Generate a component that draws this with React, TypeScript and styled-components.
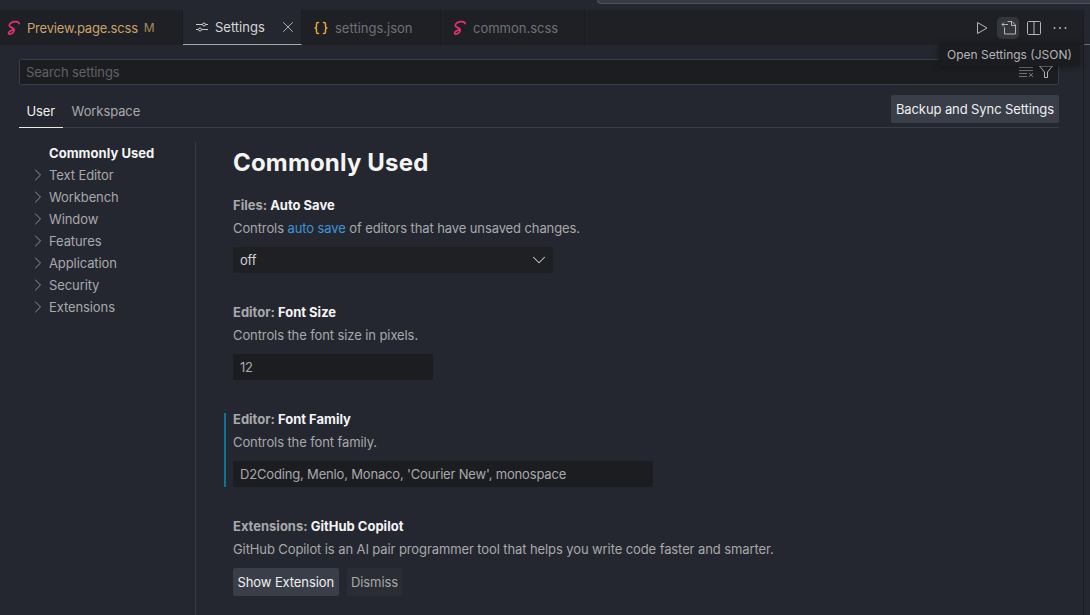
import styled, { createGlobalStyle } from 'styled-components';
import { ChevronDown, ChevronRight, X } from 'lucide-react';

const Global = createGlobalStyle`
  html, body {
    margin: 0;
    padding: 0;
    height: 100%;
    background: #24272f;
    overflow: hidden;
  }
  #root {
    height: 100%;
  }
`;

const Page = styled.div`
  width: 1090px;
  height: 615px;
  position: relative;
  overflow: hidden;
  background: #24272f;
  color: #a8a9ac;
  font-family: Inter, 'Liberation Sans', sans-serif;
  font-size: 13px;
  letter-spacing: -0.1px;
  display: flex;
  flex-direction: column;
`;

const TitleStrip = styled.div`
  height: 10px;
  flex: none;
  background: #24272f;
`;

const TitlePanel = styled.div`
  margin-left: 597px;
  height: 4px;
  box-sizing: border-box;
  background: #383b45;
  border-left: 1px solid #50535c;
  border-bottom: 1px solid #50535c;
  border-bottom-left-radius: 4px;
`;

const Workbench = styled.div`
  flex: 1;
  min-height: 0;
  display: flex;
`;

const EditorGroup = styled.div`
  width: 1084px;
  flex: none;
  box-sizing: border-box;
  border-right: 1px solid #1a1b1f;
  display: flex;
  flex-direction: column;
`;

const SidePeek = styled.div`
  flex: 1;
  height: 35px;
  box-sizing: border-box;
  border-bottom: 1px solid #6b6e75;
`;

const TabBar = styled.div`
  height: 35px;
  flex: none;
  background: #1e2025;
  display: flex;
`;

const Tab = styled.div<{ $width: number; $pad: number; $active?: boolean }>`
  width: ${(p) => p.$width}px;
  flex: none;
  box-sizing: border-box;
  display: flex;
  align-items: center;
  padding-left: ${(p) => p.$pad}px;
  gap: 6px;
  letter-spacing: 0;
  background: ${(p) => (p.$active ? '#24272f' : 'transparent')};
  border-right: 1px solid #1a1b1f;
  border-bottom: ${(p) => (p.$active ? '1px solid #a8a9ac' : '0')};
  color: ${(p) => (p.$active ? '#d6d7d9' : '#6f7175')};
`;

const TabName = styled.span<{ $modified?: boolean }>`
  color: ${(p) => (p.$modified ? '#c9a36c' : 'inherit')};
  letter-spacing: ${(p) => (p.$modified ? '-0.2px' : '0')};
`;

const TabBadge = styled.span`
  color: #a98a5c;
  font-size: 12px;
`;

const TabClose = styled.span`
  margin-left: auto;
  margin-right: 4px;
  display: flex;
  color: #c8c9cb;
`;

const Spacer = styled.div`
  flex: 1;
`;

const Actions = styled.div`
  display: flex;
  align-items: center;
  gap: 4px;
  padding-right: 12px;
`;

const ActionIcon = styled.div<{ $hover?: boolean }>`
  width: 22px;
  height: 22px;
  border-radius: 5px;
  display: flex;
  align-items: center;
  justify-content: center;
  color: #b4b5b8;
  background: ${(p) => (p.$hover ? '#33363b' : 'transparent')};
`;

const Main = styled.div`
  flex: 1;
  min-height: 0;
  padding: 14px 24px 0 19px;
  display: flex;
  flex-direction: column;
`;

const SearchBox = styled.div`
  height: 26px;
  flex: none;
  box-sizing: border-box;
  background: #1c1d21;
  border: 1px solid #383c47;
  border-radius: 2px;
  display: flex;
  align-items: center;
  padding: 0 4px 0 6px;
  color: #5f6165;
`;

const SearchTools = styled.div`
  margin-left: auto;
  margin-top: -5px;
  display: flex;
  align-items: center;
  gap: 4px;
  color: #6f7175;
`;

const TabsRow = styled.div`
  height: 43px;
  flex: none;
  box-sizing: border-box;
  border-bottom: 1px solid #383c47;
  display: flex;
  align-items: flex-end;
`;

const ScopeTab = styled.div<{ $active?: boolean }>`
  height: 32px;
  box-sizing: border-box;
  padding: 0 ${(p) => (p.$active ? '7.5px' : '9px')} 2px;
  margin-bottom: -1px;
  display: flex;
  align-items: center;
  color: ${(p) => (p.$active ? '#f0f0f1' : '#a8a9ac')};
  border-bottom: ${(p) => (p.$active ? '1px solid #e8e8e9' : '0')};
`;

const SyncButton = styled.div`
  margin-left: auto;
  margin-bottom: 4px;
  height: 28px;
  padding: 0 5px;
  border-radius: 2px;
  background: #393e49;
  color: #f0f0f1;
  display: flex;
  align-items: center;
  line-height: 28px;
`;

const Body = styled.div`
  flex: 1;
  min-height: 0;
  display: flex;
  padding-top: 14px;
`;

const Toc = styled.div`
  width: 177px;
  flex: none;
  box-sizing: border-box;
  border-right: 1px solid #383c47;
`;

const TocRow = styled.div<{ $strong?: boolean }>`
  height: 22px;
  display: flex;
  align-items: center;
  padding-left: 14px;
  gap: 5px;
  color: ${(p) => (p.$strong ? '#f4f4f5' : '#a8a9ac')};
  font-weight: ${(p) => (p.$strong ? 700 : 400)};
  letter-spacing: ${(p) => (p.$strong ? '0.05px' : '-0.1px')};
`;

const TocTwisty = styled.span<{ $hidden?: boolean }>`
  width: 11px;
  flex: none;
  display: flex;
  color: #9a9b9e;
  visibility: ${(p) => (p.$hidden ? 'hidden' : 'visible')};

  svg {
    margin-left: -5px;
    flex: none;
  }
`;

const Content = styled.div`
  flex: 1;
  min-width: 0;
  padding-left: 37px;
`;

const Heading = styled.h2`
  margin: 3px 0 15px;
  height: 36px;
  font-size: 24px;
  line-height: 36px;
  font-weight: 700;
  letter-spacing: 0.17px;
  color: #f4f4f5;
`;

const Setting = styled.div<{ $focused?: boolean }>`
  position: relative;
  height: 81px;
  margin-bottom: 26px;
  ${(p) =>
    p.$focused &&
    `&::before {
      content: '';
      position: absolute;
      left: -9px;
      top: 3px;
      height: 74px;
      width: 2px;
      background: #0f7393;
    }`}
`;

const Title = styled.div`
  height: 18px;
  line-height: 18px;
  font-weight: 700;
  letter-spacing: 0;
  color: #a8a9ac;
`;

const TitleKey = styled.span`
  color: #f4f4f5;
`;

const Desc = styled.div`
  margin-top: 5px;
  height: 18px;
  line-height: 18px;
  color: #a8a9ac;
`;

const Link = styled.span`
  color: #3f94d8;
`;

const Field = styled.div<{ $width: number }>`
  margin-top: 10px;
  width: ${(p) => p.$width}px;
  height: 26px;
  box-sizing: border-box;
  padding: 0 7px;
  border-radius: 2px;
  background: #1c1d21;
  color: #a8a9ac;
  letter-spacing: -0.17px;
  display: flex;
  align-items: center;
  justify-content: space-between;
`;

const SelectField = styled(Field)`
  background: #1e2024;
  color: #d0d1d3;
  padding-right: 3px;
`;

const ButtonRow = styled.div`
  margin-top: 10px;
  display: flex;
  gap: 8px;
`;

const Button = styled.div<{ $primary?: boolean }>`
  height: 28px;
  padding: 0 4.5px;
  border-radius: 2px;
  display: flex;
  align-items: center;
  background: ${(p) => (p.$primary ? '#393e49' : '#2a2d34')};
  color: ${(p) => (p.$primary ? '#f0f0f1' : '#a8a9ac')};
`;

const Tooltip = styled.div`
  position: absolute;
  left: 939px;
  top: 43px;
  height: 23px;
  padding: 0 8px;
  display: flex;
  align-items: center;
  border-radius: 3px;
  background: #1b1c20;
  color: #b4b5b8;
  font-size: 12px;
  letter-spacing: 0;
  box-shadow: 0 1px 6px rgba(0, 0, 0, 0.35);

  &::before {
    content: '';
    position: absolute;
    left: 65px;
    top: -4px;
    border-left: 4px solid transparent;
    border-right: 4px solid transparent;
    border-bottom: 4px solid #1b1c20;
  }
`;

function SassIcon() {
  return (
    <svg width="16" height="16" viewBox="0 0 16 16" fill="none" stroke="#e0326f" strokeWidth="1.7" strokeLinecap="round">
      <path d="M14.2 3.6C13.6 1.2 9 1 6.2 2.8 3.4 4.6 3.8 6.4 6.2 7.4c2 .8 3.6 1.6 2.8 3.6-.8 2-3.6 3.8-5 3-1.3-.9.2-3.6 5-4.4" />
    </svg>
  );
}

function JsonIcon() {
  return (
    <svg width="16" height="16" viewBox="0 0 16 16" fill="none" stroke="#e8a33d" strokeWidth="1.5" strokeLinecap="round" strokeLinejoin="round">
      <path d="M5.5 2.5H5C3.9 2.5 3.5 3 3.5 4v2.4c0 .8-.5 1.3-1.3 1.6.8.3 1.3.8 1.3 1.6V12c0 1 .4 1.5 1.5 1.5h.5" />
      <path d="M10.5 2.5h.5c1.1 0 1.5.5 1.5 1.5v2.4c0 .8.5 1.3 1.3 1.6-.8.3-1.3.8-1.3 1.6V12c0 1-.4 1.5-1.5 1.5h-.5" />
    </svg>
  );
}

function SettingsTabIcon() {
  return (
    <svg width="14" height="14" viewBox="0 0 14 14" fill="none" stroke="#c8c9cb" strokeWidth="1">
      <path d="M1 4.5h6.5M10.5 4.5H13M1 9.5h2.5M6.5 9.5H13" />
      <circle cx="9" cy="4.5" r="1.5" />
      <circle cx="5" cy="9.5" r="1.5" />
    </svg>
  );
}

function PlayIcon() {
  return (
    <svg width="16" height="16" viewBox="0 0 16 16" fill="none" stroke="currentColor" strokeWidth="1" strokeLinejoin="round">
      <path d="M3.5 2.5 13 8l-9.5 5.5z" />
    </svg>
  );
}

function OpenJsonIcon() {
  return (
    <svg width="16" height="16" viewBox="0 0 16 16" fill="none" stroke="currentColor" strokeWidth="1" strokeLinejoin="round">
      <path d="M7.5 1.5H12l3.5 3.5v9H4.5V7.5" />
      <path d="M11.5 1.5v4h4" />
      <path d="M8 4.5H2M4 2.5l-2 2 2 2" />
    </svg>
  );
}

function SplitIcon() {
  return (
    <svg width="16" height="16" viewBox="0 0 16 16" fill="none" stroke="currentColor" strokeWidth="1">
      <rect x="1.5" y="1.5" width="13" height="13" rx="1" />
      <path d="M8 1.5v13" />
    </svg>
  );
}

function DotsIcon() {
  return (
    <svg width="16" height="16" viewBox="0 0 16 16" fill="currentColor">
      <circle cx="2.5" cy="8" r="1" />
      <circle cx="8" cy="8" r="1" />
      <circle cx="13.5" cy="8" r="1" />
    </svg>
  );
}

function ClearIcon() {
  return (
    <svg width="16" height="16" viewBox="0 0 16 16" fill="none" stroke="currentColor" strokeWidth="1">
      <path d="M1 5.5h14M1 8.5h14M1 11.5h8M1 14.5h8" />
      <path d="M11 11l4 4M15 11l-4 4" />
    </svg>
  );
}

function FilterIcon() {
  return (
    <svg width="16" height="16" viewBox="0 0 16 16" fill="none" stroke="#b4b5b8" strokeWidth="1" strokeLinejoin="round">
      <path d="M1.5 4h13l-5 6v5.5h-3V10z" />
    </svg>
  );
}

const tocItems = ['Text Editor', 'Workbench', 'Window', 'Features', 'Application', 'Security', 'Extensions'];

export default function App() {
  return (
    <Page>
      <Global />
      <TitleStrip>
        <TitlePanel />
      </TitleStrip>
      <Workbench>
        <EditorGroup>
          <TabBar>
            <Tab $width={183} $pad={5}>
              <SassIcon />
              <TabName $modified>Preview.page.scss</TabName>
              <TabBadge>M</TabBadge>
            </Tab>
            <Tab $width={119} $pad={12} $active>
              <SettingsTabIcon />
              <span>Settings</span>
              <TabClose>
                <X size={18} strokeWidth={1.1} />
              </TabClose>
            </Tab>
            <Tab $width={139} $pad={11}>
              <JsonIcon />
              <span>settings.json</span>
            </Tab>
            <Tab $width={144} $pad={10}>
              <SassIcon />
              <span>common.scss</span>
            </Tab>
            <Spacer />
            <Actions>
              <ActionIcon>
                <PlayIcon />
              </ActionIcon>
              <ActionIcon $hover>
                <OpenJsonIcon />
              </ActionIcon>
              <ActionIcon>
                <SplitIcon />
              </ActionIcon>
              <ActionIcon>
                <DotsIcon />
              </ActionIcon>
            </Actions>
          </TabBar>
          <Main>
            <SearchBox>
              <span>Search settings</span>
              <SearchTools>
                <ClearIcon />
                <FilterIcon />
              </SearchTools>
            </SearchBox>
            <TabsRow>
              <ScopeTab $active>User</ScopeTab>
              <ScopeTab>Workspace</ScopeTab>
              <SyncButton>Backup and Sync Settings</SyncButton>
            </TabsRow>
            <Body>
              <Toc>
                <TocRow $strong>
                  <TocTwisty $hidden />
                  Commonly Used
                </TocRow>
                {tocItems.map((item) => (
                  <TocRow key={item}>
                    <TocTwisty>
                      <ChevronRight size={20} strokeWidth={1.1} />
                    </TocTwisty>
                    {item}
                  </TocRow>
                ))}
              </Toc>
              <Content>
                <Heading>Commonly Used</Heading>
                <Setting>
                  <Title>
                    Files: <TitleKey>Auto Save</TitleKey>
                  </Title>
                  <Desc>
                    Controls <Link>auto save</Link> of editors that have unsaved changes.
                  </Desc>
                  <SelectField $width={320}>
                    off
                    <ChevronDown size={22} strokeWidth={1.1} />
                  </SelectField>
                </Setting>
                <Setting>
                  <Title>
                    Editor: <TitleKey>Font Size</TitleKey>
                  </Title>
                  <Desc>Controls the font size in pixels.</Desc>
                  <Field $width={200}>12</Field>
                </Setting>
                <Setting $focused>
                  <Title>
                    Editor: <TitleKey>Font Family</TitleKey>
                  </Title>
                  <Desc>Controls the font family.</Desc>
                  <Field $width={420}>D2Coding, Menlo, Monaco, 'Courier New', monospace</Field>
                </Setting>
                <Setting>
                  <Title>
                    Extensions: <TitleKey>GitHub Copilot</TitleKey>
                  </Title>
                  <Desc>GitHub Copilot is an AI pair programmer tool that helps you write code faster and smarter.</Desc>
                  <ButtonRow>
                    <Button $primary>Show Extension</Button>
                    <Button>Dismiss</Button>
                  </ButtonRow>
                </Setting>
              </Content>
            </Body>
          </Main>
        </EditorGroup>
        <SidePeek />
      </Workbench>
      <Tooltip>Open Settings (JSON)</Tooltip>
    </Page>
  );
}
